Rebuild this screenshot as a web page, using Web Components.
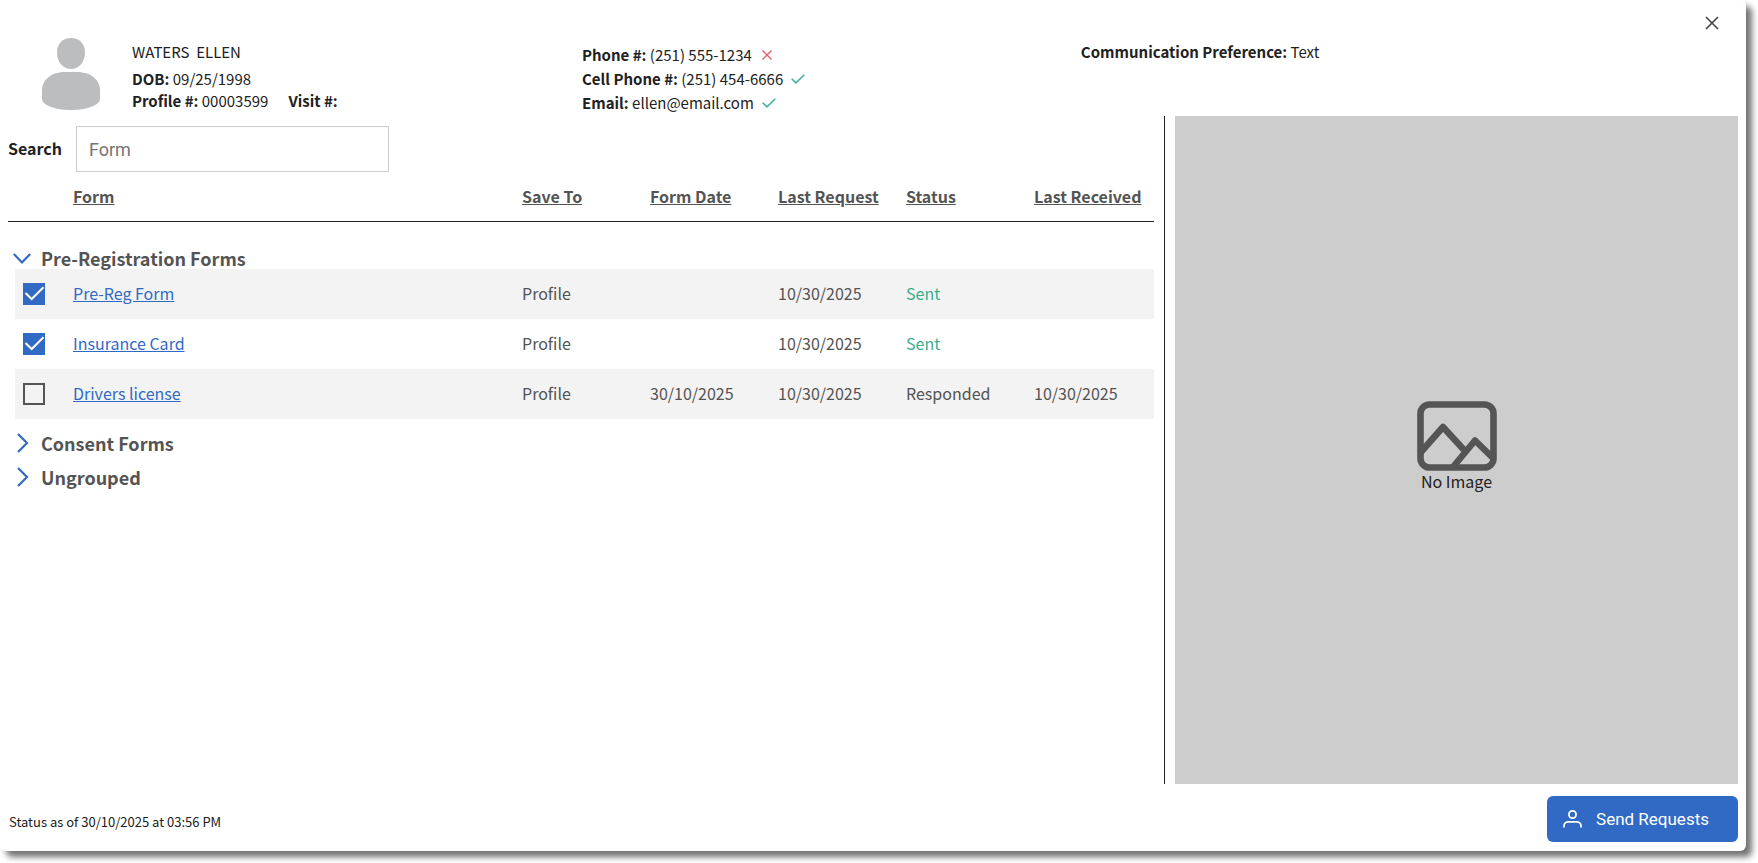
<!DOCTYPE html>
<html lang="en">
<head>
<meta charset="utf-8">
<meta name="viewport" content="width=device-width, initial-scale=1">
<title>Form Requests</title>
<style>
  html, body { margin: 0; background: #fff; }
  body {
    font-family: "Noto Sans CJK SC", "Noto Sans", sans-serif;
    font-size: 16px;
    line-height: 24px;
    color: #212121;
    --muted: #545454;
    --blue: #316ac5;
    --green: #3aad8b;
    --ui-font: Roboto, "Liberation Sans", sans-serif;
  }
</style>
</head>
<body>
<request-dialog>
  <patient-header slot="header"></patient-header>
  <forms-panel slot="forms"></forms-panel>
  <image-preview slot="preview">No Image</image-preview>
  <span slot="status">Status as of 30/10/2025 at 03:56 PM</span>
  <send-button slot="action">Send Requests</send-button>
</request-dialog>

<script>
class BaseElement extends HTMLElement {
  connectedCallback() {
    if (this.shadowRoot) return;
    this.attachShadow({ mode: "open" }).innerHTML = this.render();
  }
}

customElements.define("request-dialog", class extends BaseElement {
  render() {
    return `
    <style>
      :host {
        display: flex; flex-direction: column; box-sizing: border-box;
        position: relative;
        min-height: calc(100vh - 12px); margin: 0 12px 12px 0;
        background: #fff; border-radius: 6px;
        box-shadow: 6px 6px 6px #737373;
      }
      .close {
        position: absolute; top: 11px; right: 22px;
        width: 24px; height: 24px; padding: 0; border: 0; background: none; cursor: pointer;
      }
      .close svg { display: block; margin: auto; }
      main { flex: 1; display: grid; grid-template-columns: 2fr 1fr; }
      footer {
        display: flex; justify-content: space-between; align-items: flex-end;
        padding: 12px 8px 9px; font-size: 13px;
      }
      .status { padding: 0 0 8px 1px; }
    </style>
    <slot name="header"></slot>
    <button class="close" aria-label="Close">
      <svg width="14" height="14" viewBox="0 0 14 14" fill="none" stroke="#444" stroke-width="1.6"><path d="M1 1l12 12M13 1L1 13"/></svg>
    </button>
    <main><slot name="forms"></slot><slot name="preview"></slot></main>
    <footer><div class="status"><slot name="status"></slot></div><slot name="action"></slot></footer>`;
  }
});

customElements.define("contact-line", class extends BaseElement {
  render() {
    const icons = {
      valid: `<svg width="14" height="10" viewBox="0 0 14 10" fill="none" stroke="#3fb0a5" stroke-width="1.5"><path d="M.7 4.7l4.2 4.2L13.3.7"/></svg>`,
      invalid: `<svg width="10" height="10" viewBox="0 0 10 10" fill="none" stroke="#e75a6b" stroke-width="1.4"><path d="M.5.5l9 9M9.5.5l-9 9"/></svg>`
    };
    const state = this.getAttribute("state");
    return `
    <style>
      :host { display: flex; align-items: center; white-space: pre; }
      b { font-weight: 700; }
      svg { margin-left: ${state === "invalid" ? 10 : 8}px; }
    </style>
    <b>${this.getAttribute("label")}</b><span> <slot></slot></span>${icons[state] || ""}`;
  }
});

customElements.define("patient-header", class extends BaseElement {
  render() {
    return `
    <style>
      :host {
        display: grid; grid-template-columns: 7fr 6fr 8fr; box-sizing: border-box;
        min-height: 116px; font-size: 15px; line-height: 22px;
      }
      .who { display: flex; gap: 32px; padding: 38px 0 0 42px; }
      .who svg { flex: none; }
      .name { white-space: pre; padding: 3px 0 5px; }
      .ids { display: flex; gap: 20px; }
      .lines { display: grid; align-content: start; line-height: 24px; padding-top: 43px; }
      .pref { padding-top: 41px; }
    </style>
    <section class="who">
      <svg width="58" height="72" viewBox="0 0 58 72" fill="#bbbdbf" role="img" aria-label="Patient photo">
        <path d="M29 0C37.500 0 43 6 43 14.500C43 24 37 31 29 31S15 24 15 14.500C15 6 20.500 0 29 0Z"/>
        <path d="M23 34h12C50 34 58 43 58 52v9c0 6-13 11-29 11S0 67 0 61v-9C0 43 8 34 23 34Z"/>
      </svg>
      <div>
        <div class="name">WATERS  ELLEN</div>
        <contact-line label="DOB:">09/25/1998</contact-line>
        <div class="ids">
          <contact-line label="Profile #:">00003599</contact-line>
          <contact-line label="Visit #:"></contact-line>
        </div>
      </div>
    </section>
    <section class="lines">
      <contact-line label="Phone #:" state="invalid">(251) 555-1234</contact-line>
      <contact-line label="Cell Phone #:" state="valid">(251) 454-6666</contact-line>
      <contact-line label="Email:" state="valid">ellen@email.com</contact-line>
    </section>
    <section class="pref">
      <contact-line label="Communication Preference:">Text</contact-line>
    </section>`;
  }
});

const COLUMNS = ["Form", "Save To", "Form Date", "Last Request", "Status", "Last Received"];
const GROUPS = [
  { name: "Pre-Registration Forms", open: true, rows: [
    { checked: true, cells: ["Pre-Reg Form", "Profile", "", "10/30/2025", "Sent", ""] },
    { checked: true, cells: ["Insurance Card", "Profile", "", "10/30/2025", "Sent", ""] },
    { checked: false, cells: ["Drivers license", "Profile", "30/10/2025", "10/30/2025", "Responded", "10/30/2025"] }
  ] },
  { name: "Consent Forms", rows: [] },
  { name: "Ungrouped", rows: [] }
];

customElements.define("forms-panel", class extends BaseElement {
  render() {
    const cell = (text, i) =>
      i === 0 ? `<td><a href="#">${text}</a></td>` :
      `<td${text === "Sent" ? ' class="sent"' : ""}>${text}</td>`;
    const row = r => `
      <tr class="row">
        <td class="pick"><input type="checkbox" aria-label="${r.cells[0]}"${r.checked ? " checked" : ""}></td>
        ${r.cells.map(cell).join("")}
      </tr>`;
    const group = g => `
      <tbody>
        <tr class="group${g.open ? " open" : ""}"><th colspan="7" scope="rowgroup">
          <button aria-expanded="${!!g.open}">
            <svg width="18" height="20" viewBox="0 0 18 20" fill="none" stroke="#316ac5" stroke-width="2.200">
              <path d="${g.open ? "M.8 6l8.200 8.500L17.200 6" : "M5 1l9 9-9 9"}"/>
            </svg>${g.name}</button>
        </th></tr>
        ${g.rows.map(row).join("")}
      </tbody>`;
    return `
    <style>
      :host { display: block; padding: 10px 10px 0 8px; color: var(--muted); }
      .search { display: flex; align-items: center; gap: 14px; }
      label { font-weight: 700; color: #212121; padding-bottom: 2px; }
      .search input {
        box-sizing: border-box; width: 313px; height: 46px; padding: 0 12px;
        border: 1px solid #ccc; background: #fff; font: 18px var(--ui-font); color: #212121;
      }
      .search input::placeholder { color: #757575; }
      table { width: 100%; border-collapse: separate; border-spacing: 0; table-layout: fixed; }
      th, td { box-sizing: border-box; padding: 0; text-align: left; white-space: nowrap; }
      .c-pick { width: 65px; } .c { width: 128px; } .c-last { width: 120px; }
      thead :is(th, td) { height: 50px; border-bottom: 1px solid #212121; padding-bottom: 2px; }
      button {
        padding: 0; border: 0; background: none; color: inherit; cursor: pointer;
        font: inherit; font-weight: 700; line-height: 24px;
      }
      thead button { text-decoration: underline; }
      .group th { height: 34px; }
      .open th { height: 47px; vertical-align: bottom; }
      .group button { display: flex; align-items: center; gap: 10px; padding-left: 5px; font-size: 18px; line-height: 22px; }
      tbody:nth-of-type(2) th { height: 41px; padding-top: 7px; }
      .row td { height: 50px; padding-bottom: 2px; }
      .row { background: linear-gradient(#f3f3f3, #f3f3f3) right / calc(100% - 7px) no-repeat; }
      .row:nth-child(odd) { background: none; }
      a { color: var(--blue); text-decoration: underline; }
      .sent { color: var(--green); }
      .row .pick { padding: 0 0 0 15px; }
      .pick input {
        appearance: none; box-sizing: border-box; display: block; width: 22px; height: 22px; margin: 0;
        border: 2px solid var(--muted);
      }
      .pick input:checked {
        border: 0;
        background: var(--blue) url("data:image/svg+xml,%3Csvg xmlns='http://www.w3.org/2000/svg' viewBox='0 0 22 22' fill='none' stroke='white' stroke-width='2'%3E%3Cpath d='M2.500 10l6.200 6L20.500 4.300'/%3E%3C/svg%3E");
      }
    </style>
    <div class="search">
      <label for="q">Search</label>
      <input id="q" type="text" placeholder="Form">
    </div>
    <table>
      <colgroup><col class="c-pick"><col><col class="c"><col class="c"><col class="c"><col class="c"><col class="c-last"></colgroup>
      <thead><tr><td></td>${COLUMNS.map(c => `<th scope="col"><button>${c}</button></th>`).join("")}</tr></thead>
      ${GROUPS.map(group).join("")}
    </table>`;
  }
});

customElements.define("image-preview", class extends BaseElement {
  render() {
    return `
    <style>
      :host { display: flex; border-left: 1px solid #212121; padding: 0 8px 0 10px; }
      .box {
        flex: 1; display: flex; flex-direction: column; align-items: center; justify-content: center;
        padding-bottom: 8px; background: #cdcdcd; line-height: 20px;
      }
      svg { display: block; }
    </style>
    <div class="box">
      <svg width="80" height="70" viewBox="0 0 80 70" fill="none" stroke="#555" stroke-width="6.600" stroke-linejoin="round" aria-hidden="true">
        <rect x="3.500" y="3.500" width="73" height="63" rx="9"/>
        <path d="M4 51L26 26L48 50M36 66L58 39.500L76 57"/>
      </svg>
      <slot></slot>
    </div>`;
  }
});

customElements.define("send-button", class extends BaseElement {
  render() {
    return `
    <style>
      :host { display: block; }
      button {
        display: flex; align-items: center; gap: 14px; height: 46px; padding: 0 29px 0 16px;
        border: 0; border-radius: 6px; background: var(--blue); color: #fff;
        font: 17px var(--ui-font); cursor: pointer;
      }
    </style>
    <button>
      <svg width="19" height="18" viewBox="0 0 19 18" fill="none" stroke="#fff" stroke-width="1.800" aria-hidden="true">
        <circle cx="9.500" cy="4.500" r="3.600"/>
        <path d="M1 17.500v-1.500c0-2.500 2-4.200 4.500-4.200h8c2.500 0 4.500 1.700 4.500 4.200v1.500"/>
      </svg>
      <slot></slot>
    </button>`;
  }
});
</script>
</body>
</html>
